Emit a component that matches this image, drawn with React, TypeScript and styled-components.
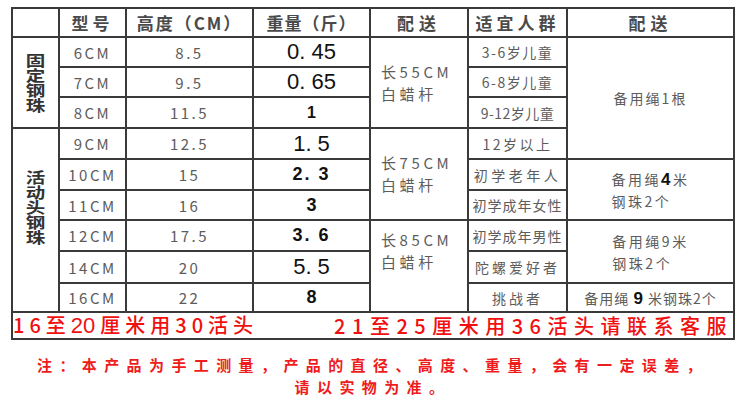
import React from "react";
import styled, { createGlobalStyle } from "styled-components";

const Global = createGlobalStyle`
  html, body { margin: 0; padding: 0; background: #ffffff; }
  body { font-family: "Noto Sans CJK SC", "Noto Sans", sans-serif; }
`;

const Page = styled.div`
  width: 750px;
  height: 400px;
  overflow: hidden;
  background: #fff;
  padding: 7px 0 0 11px;
  box-sizing: border-box;
`;

const Table = styled.div`
  display: grid;
  grid-template-columns: 45px 65px 125px 115px 96px 97px 165px;
  grid-template-rows: 27px 28px 28px 29px 29px 29px 28px 29px 30px 27px 25px;
  gap: 2px;
  padding: 2px;
  background: #3a3a3a;
  width: max-content;
`;

type CellProps = {
  $col: string;
  $row: string;
  $justify?: string;
  $padL?: number;
  $padB?: number;
};

const Cell = styled.div<CellProps>`
  grid-column: ${(p) => p.$col};
  grid-row: ${(p) => p.$row};
  background: #fff;
  display: flex;
  align-items: center;
  justify-content: ${(p) => p.$justify || "center"};
  padding-left: ${(p) => p.$padL || 0}px;
  padding-bottom: ${(p) => p.$padB || 0}px;
  box-sizing: border-box;
  color: #5c5c5c;
  font-size: 15px;
  white-space: nowrap;
  overflow: hidden;
`;

const Head = styled.span<{ $ls?: number }>`
  font-size: 17px;
  font-weight: 700;
  color: #4a4a4a;
  letter-spacing: ${(p) => p.$ls ?? 3}px;
`;

const Vertical = styled.span`
  writing-mode: vertical-rl;
  text-orientation: upright;
  font-size: 15px;
  line-height: 15px;
  letter-spacing: 0;
  font-weight: 700;
  color: #333;
  transform: scaleX(1.3);
`;

const Plain = styled.span<{ $ls?: number; $size?: number }>`
  font-size: ${(p) => p.$size ?? 15}px;
  letter-spacing: ${(p) => p.$ls ?? 2.5}px;
  color: #5c5c5c;
`;

const Weight = styled.span<{ $bold?: boolean; $size: number; $ls?: number }>`
  font-family: "Liberation Sans", Arial, sans-serif;
  font-size: ${(p) => p.$size}px;
  font-weight: ${(p) => (p.$bold ? 700 : 400)};
  letter-spacing: ${(p) => p.$ls ?? 0}px;
  color: #111;
  white-space: pre;
`;

const Stack = styled.div<{ $ls?: number; $size?: number }>`
  display: flex;
  flex-direction: column;
  align-items: flex-start;
  font-size: ${(p) => p.$size ?? 15}px;
  line-height: 22px;
  letter-spacing: ${(p) => p.$ls ?? 3.6}px;
  color: #5c5c5c;
`;

const Strong = styled.span<{ $size?: number }>`
  font-family: "Liberation Sans", Arial, sans-serif;
  font-weight: 700;
  font-size: ${(p) => p.$size ?? 16}px;
  color: #111;
  line-height: 1;
`;

const RedRow = styled.div`
  grid-column: 1 / -1;
  grid-row: 11;
  background: #fff;
  display: flex;
  align-items: center;
  justify-content: space-between;
  white-space: nowrap;
`;

const RedText = styled.span<{ $ls: number }>`
  color: #f01010;
  font-size: 20px;
  font-weight: 500;
  letter-spacing: ${(p) => p.$ls}px;
  line-height: 22px;
`;

const AltDigits = styled.span`
  font-family: "Liberation Sans", Arial, sans-serif;
  font-size: 22px;
  font-weight: 400;
  letter-spacing: 0;
  margin-right: 5px;
`;

const Note = styled.div`
  margin: 14px 0 0 0;
  width: 724px;
  text-align: center;
  color: #ee1c1c;
  font-size: 15px;
  font-weight: 700;
  line-height: 22px;
  letter-spacing: 7.4px;
`;

const models = ["6CM", "7CM", "8CM", "9CM", "10CM", "11CM", "12CM", "14CM", "16CM"];
const heights = ["8.5", "9.5", "11.5", "12.5", "15", "16", "17.5", "20", "22"];
const weights: { t: string; bold?: boolean; size: number; ls?: number }[] = [
  { t: "0. 45", size: 22 },
  { t: "0. 65", size: 22 },
  { t: "1", bold: true, size: 16 },
  { t: "1. 5", size: 22 },
  { t: "2. 3", bold: true, size: 18, ls: 2 },
  { t: "3", bold: true, size: 18 },
  { t: "3. 6", bold: true, size: 18, ls: 2 },
  { t: "5. 5", size: 22 },
  { t: "8", bold: true, size: 18 },
];
const crowds: { t: string; ls: number; size?: number }[] = [
  { t: "3-6岁儿童", ls: 1.5 },
  { t: "6-8岁儿童", ls: 1.5 },
  { t: "9-12岁儿童", ls: 0.5 },
  { t: "12岁以上", ls: 2.5 },
  { t: "初学老年人", ls: 3.5, size: 14 },
  { t: "初学成年女性", ls: 1, size: 14 },
  { t: "初学成年男性", ls: 1, size: 14 },
  { t: "陀螺爱好者", ls: 3, size: 14 },
  { t: "挑战者", ls: 3, size: 14 },
];

export default function App() {
  return (
    <Page>
      <Global />
      <Table>
        <Cell $col="1" $row="1" />
        <Cell $col="2" $row="1"><Head $ls={4}>型号</Head></Cell>
        <Cell $col="3" $row="1"><Head $ls={2}>高度（CM）</Head></Cell>
        <Cell $col="4" $row="1"><Head $ls={1}>重量（斤）</Head></Cell>
        <Cell $col="5" $row="1"><Head $ls={5}>配送</Head></Cell>
        <Cell $col="6" $row="1"><Head $ls={4}>适宜人群</Head></Cell>
        <Cell $col="7" $row="1"><Head $ls={5}>配送</Head></Cell>

        <Cell $col="1" $row="2 / 5"><Vertical>固定钢珠</Vertical></Cell>
        <Cell $col="1" $row="5 / 11" $padB={26}><Vertical>活动头钢珠</Vertical></Cell>

        {models.map((m, i) => (
          <Cell key={m} $col="2" $row={String(i + 2)}><Plain>{m}</Plain></Cell>
        ))}
        {heights.map((h, i) => (
          <Cell key={h} $col="3" $row={String(i + 2)}><Plain>{h}</Plain></Cell>
        ))}
        {weights.map((w, i) => (
          <Cell key={i} $col="4" $row={String(i + 2)}>
            <Weight $bold={w.bold} $size={w.size} $ls={w.ls}>{w.t}</Weight>
          </Cell>
        ))}

        <Cell $col="5" $row="2 / 5" $justify="flex-start" $padL={10}>
          <Stack><span>长55CM</span><span>白蜡杆</span></Stack>
        </Cell>
        <Cell $col="5" $row="5 / 8" $justify="flex-start" $padL={10}>
          <Stack><span>长75CM</span><span>白蜡杆</span></Stack>
        </Cell>
        <Cell $col="5" $row="8 / 11" $justify="flex-start" $padL={10} $padB={30}>
          <Stack><span>长85CM</span><span>白蜡杆</span></Stack>
        </Cell>

        {crowds.map((c, i) => (
          <Cell key={c.t} $col="6" $row={String(i + 2)}>
            <Plain $ls={c.ls} $size={c.size ?? 14}>{c.t}</Plain>
          </Cell>
        ))}

        <Cell $col="7" $row="2 / 6">
          <Plain $ls={2} $size={14}>备用绳1根</Plain>
        </Cell>
        <Cell $col="7" $row="6 / 8">
          <Stack $ls={2.5} $size={14}>
            <span>备用绳<Strong $size={17}>4</Strong>米</span>
            <span>钢珠2个</span>
          </Stack>
        </Cell>
        <Cell $col="7" $row="8 / 10">
          <Stack $ls={2.5} $size={14}>
            <span>备用绳9米</span>
            <span>钢珠2个</span>
          </Stack>
        </Cell>
        <Cell $col="7" $row="10">
          <Plain $ls={1} $size={14}>
            备用绳 <Strong $size={17}>9</Strong> 米钢珠2个
          </Plain>
        </Cell>

        <RedRow>
          <RedText $ls={5}>16至<AltDigits>20</AltDigits>厘米用30活头</RedText>
          <RedText $ls={6.5}>21至25厘米用36活头请联系客服</RedText>
        </RedRow>
      </Table>
      <Note>
        注：本产品为手工测量，产品的直径、高度、重量，会有一定误差，
        <br />
        请以实物为准。
      </Note>
    </Page>
  );
}
